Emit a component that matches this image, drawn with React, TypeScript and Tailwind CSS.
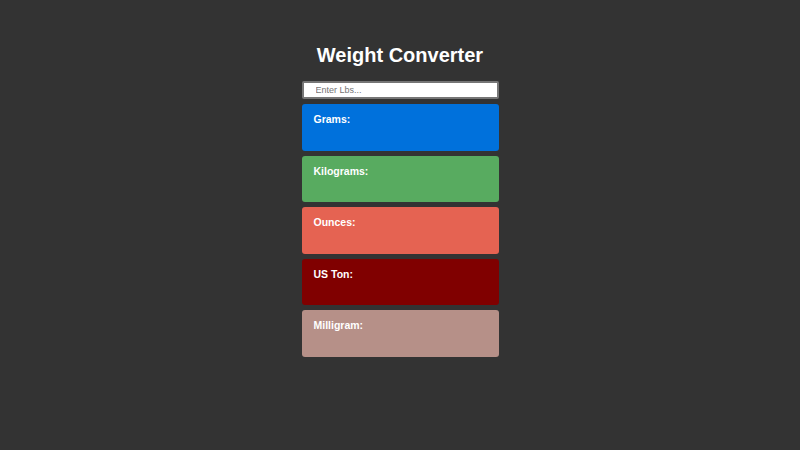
import { useState } from 'react'

const units = [
  { label: 'Grams:', color: 'bg-[#0071dc]' },
  { label: 'Kilograms:', color: 'bg-[#58ab60]' },
  { label: 'Ounces:', color: 'bg-[#e56352]' },
  { label: 'US Ton:', color: 'bg-[#800000]' },
  { label: 'Milligram:', color: 'bg-[#b69088]' },
]

export default function App() {
  const [lbs, setLbs] = useState('')

  return (
    <div className="min-h-screen bg-[#333333] pt-[43px] font-['Liberation_Sans',Arial,sans-serif]">
      <div className="w-[197px] mx-auto">
        <h1 className="text-[20px] font-bold text-white text-center leading-[24px] mb-[14px]">
          Weight Converter
        </h1>

        <input
          value={lbs}
          onChange={(e) => setLbs(e.target.value)}
          placeholder="Enter Lbs..."
          className="block w-full h-[18px] bg-white border-2 border-[#767676] rounded-[2px] pl-[12px] text-[9px] text-gray-800 placeholder:text-[#757575] outline-none mb-[5px]"
        />

        <div className="flex flex-col gap-[5px]">
          {units.map((u) => (
            <div key={u.label} className={`${u.color} h-[46.5px] rounded-[3px] px-[12px] pt-[9px]`}>
              <p className="text-[10.5px] font-bold text-white leading-[13px]">{u.label}</p>
            </div>
          ))}
        </div>
      </div>
    </div>
  )
}
